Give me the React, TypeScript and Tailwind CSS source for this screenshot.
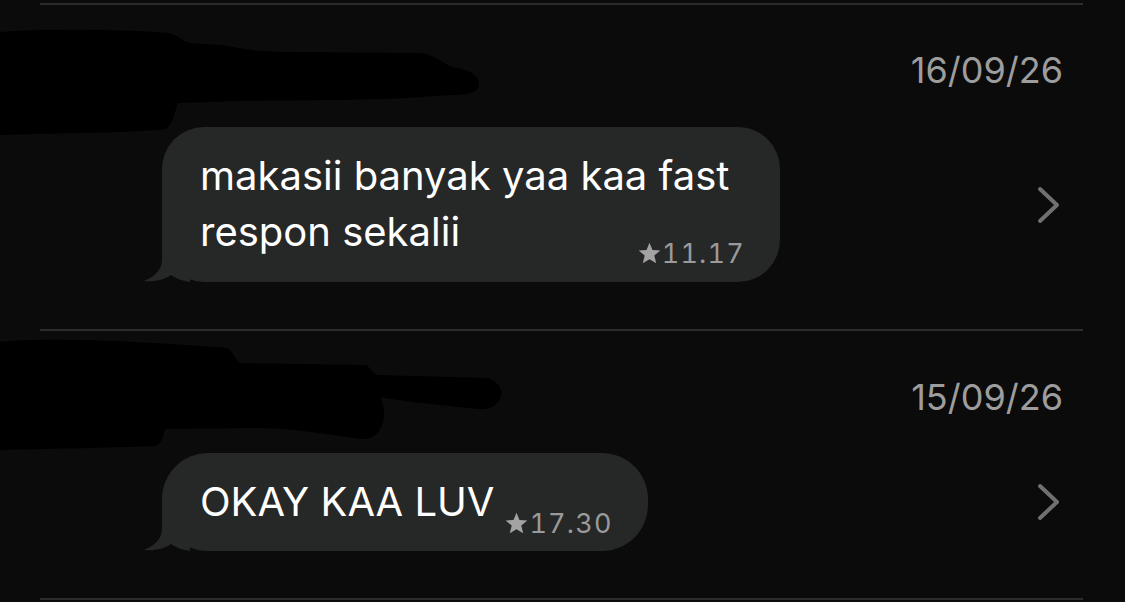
import React from "react";

const font = { fontFamily: "Inter, 'Liberation Sans', sans-serif" };

function Tail() {
  return (
    <svg
      className="absolute left-[-18px] bottom-0"
      width="46"
      height="46"
      viewBox="0 0 46 46"
    >
      <path
        d="M18 0 L18 24 C18 34 10 41 0 45 C10 46 20 44 27 39 C33 43 39 45 46 46 L46 0 Z"
        fill="#262727"
      />
    </svg>
  );
}

function Chevron() {
  return (
    <svg width="26" height="40" viewBox="0 0 26 40" className="shrink-0">
      <polyline
        points="4,4 21,20 4,36"
        fill="none"
        stroke="#707071"
        strokeWidth="4"
        strokeLinecap="round"
        strokeLinejoin="round"
      />
    </svg>
  );
}

function Star() {
  return (
    <svg width="23" height="23" viewBox="0 0 24 24" className="inline-block mr-[1px] -mt-[5px] align-middle">
      <path
        d="M12 0.8 L15.1 8.3 L23.3 8.9 L17 14.2 L19 22.3 L12 17.9 L5 22.3 L7 14.2 L0.7 8.9 L8.9 8.3 Z"
        fill="#a3a3a3"
      />
    </svg>
  );
}

function Time({ t }: { t: string }) {
  return (
    <span className="whitespace-nowrap text-[27px] leading-[30px] text-[#9a9a9b] tabular-nums tracking-[1.2px]">
      <Star />
      {t}
    </span>
  );
}

function Redact1() {
  return (
    <svg
      className="absolute left-0 top-0 pointer-events-none"
      width="520"
      height="140"
      viewBox="0 0 520 140"
    >
      <path
        d="M0 27 C40 24 120 24 168 28 C178 30 182 36 190 38 L222 40 C240 44 262 47 290 47 L420 48 C436 50 442 58 452 62 C468 64 480 70 479 80 C478 88 466 90 452 90 C420 92 400 94 340 95 L240 96 L178 98 C174 108 174 118 166 124 C130 128 60 128 0 130 Z"
        fill="#000"
      />
    </svg>
  );
}

function Redact2() {
  return (
    <svg
      className="absolute left-0 top-0 pointer-events-none"
      width="540"
      height="120"
      viewBox="0 0 540 120"
    >
      <path
        d="M0 11 C40 6 140 10 228 17 C234 22 236 30 240 32 L300 33 L366 34 C372 38 372 43 378 44 L488 47 C500 52 504 60 500 68 C496 76 488 79 478 78 C440 74 400 70 380 66 C384 74 386 84 382 94 C378 104 372 108 362 108 C330 104 300 98 260 97 L165 98 C163 106 162 112 156 115 C100 117 40 118 0 119 Z"
        fill="#000"
      />
    </svg>
  );
}

export default function App() {
  return (
    <div className="w-[1125px] h-[602px] bg-[#0b0b0b] overflow-hidden flex flex-col" style={font}>
      <div className="h-[3px] shrink-0" />
      <div className="h-[2px] ml-[40px] mr-[42px] bg-[#2c2c2d] shrink-0" />

      {/* Row 1 */}
      <div className="relative h-[324px] shrink-0 flex flex-col">
        <div className="flex justify-end pr-[62px] pt-[44px]">
          <span className="text-[36px] leading-[42px] text-[#9d9d9e]">16/09/26</span>
        </div>
        <div className="flex items-center justify-between pl-[162px] pr-[63px] mt-[36px]">
          <div className="relative w-[618px] h-[155px] rounded-[42px] bg-[#262727] pl-[38px] pr-[35px] pt-[21px] flex flex-col">
            <Tail />
            <p className="relative text-[40px] leading-[56px] text-white">makasii banyak yaa kaa fast</p>
            <div className="relative flex items-start justify-between">
              <p className="text-[40px] leading-[56px] text-white">respon sekalii</p>
              <span className="mt-[35px]">
                <Time t="11.17" />
              </span>
            </div>
          </div>
          <Chevron />
        </div>
        <Redact1 />
      </div>

      <div className="h-[2px] ml-[40px] mr-[42px] bg-[#2c2c2d] shrink-0" />

      {/* Row 2 */}
      <div className="relative h-[267px] shrink-0 flex flex-col">
        <div className="flex justify-end pr-[62px] pt-[45px]">
          <span className="text-[36px] leading-[42px] text-[#9d9d9e]">15/09/26</span>
        </div>
        <div className="flex items-center justify-between pl-[162px] pr-[63px] mt-[35px]">
          <div className="relative h-[98px] rounded-[46px] bg-[#262727] pl-[38px] pr-[35px] pt-[21px] flex items-start">
            <Tail />
            <p className="relative text-[40px] leading-[56px] text-white">OKAY KAA LUV</p>
            <span className="relative ml-[11px] mt-[35px]">
              <Time t="17.30" />
            </span>
          </div>
          <Chevron />
        </div>
        <Redact2 />
      </div>

      <div className="h-[2px] ml-[40px] mr-[42px] bg-[#2c2c2d] shrink-0" />
    </div>
  );
}
